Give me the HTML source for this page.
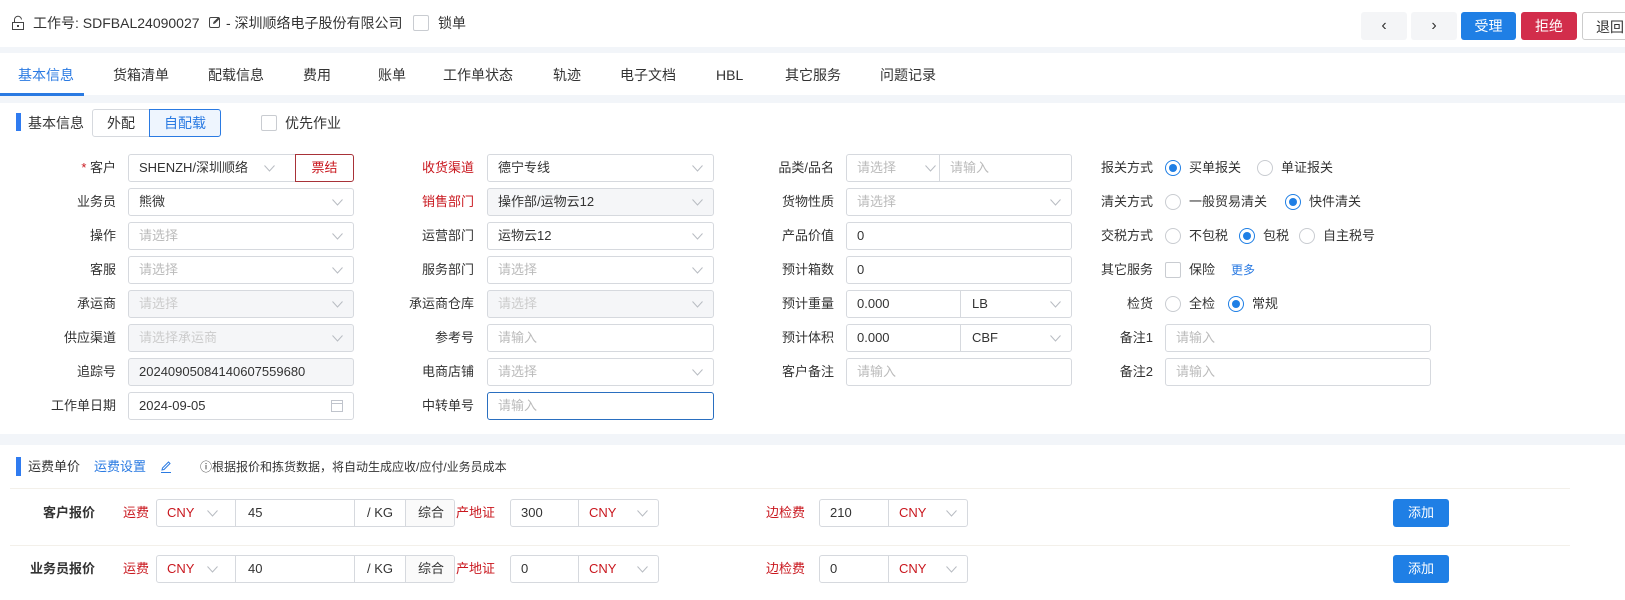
<!DOCTYPE html>
<html><head><meta charset="utf-8">
<style>
*{box-sizing:border-box;margin:0;padding:0}
body{width:1625px;height:600px;overflow:hidden;background:#fff;font-family:"Liberation Sans","Noto Sans CJK SC",sans-serif;font-size:13px;color:#333;position:relative}
.a{position:absolute}
.band{position:absolute;left:0;width:1625px;background:#f2f5f9}
.lbl{position:absolute;width:110px;text-align:right;line-height:28px;height:28px;white-space:nowrap}
.red{color:#c9171e}
.in{position:absolute;height:28px;border:1px solid #d6d9de;border-radius:3px;line-height:26px;padding-left:10px;background:#fff;white-space:nowrap;overflow:hidden}
.dis{background:#f5f6f8}
.ph{color:#bbb}
.chev{position:absolute;right:10px;top:10px;width:11px;height:7px}
.btn{position:absolute;top:12px;height:28px;border-radius:3px;text-align:center;line-height:28px;font-size:14px}
.radio{position:absolute;width:16px;height:16px;border:1px solid #c9ccd1;border-radius:50%;background:#fff}
.radio.on{border-color:#1f7fe5}
.radio.on:after{content:"";position:absolute;left:3px;top:3px;width:8px;height:8px;border-radius:50%;background:#1f7fe5}
.cb{position:absolute;width:16px;height:16px;border:1px solid #c9ccd1;border-radius:2px;background:#fff}
.t{position:absolute;line-height:16px;white-space:nowrap}
.seg{position:absolute;top:0;height:26px;border-left:1px solid #d6d9de;line-height:26px}
</style></head><body>
<svg width="0" height="0" style="position:absolute"><defs><symbol id="cv" viewBox="0 0 11 7"><path d="M0.5 0.5 L5.5 6 L10.5 0.5" fill="none" stroke="#b8bcc2" stroke-width="1"/></symbol></defs></svg>

<svg class="a" style="left:10px;top:15px" width="16" height="16" viewBox="0 0 16 16"><rect x="2.5" y="7.5" width="11" height="7" fill="none" stroke="#444"/><path d="M4.5 7.5 V5 a3.5 3.5 0 0 1 7 -0.5" fill="none" stroke="#444"/><rect x="7" y="10" width="2" height="2" fill="#444"/></svg>
<div class="t" style="left:33px;top:15px;font-size:14px;color:#333">工作号: SDFBAL24090027</div>
<svg class="a" style="left:209px;top:16px" width="12" height="12" viewBox="0 0 12 12"><rect x="0.5" y="1.5" width="10" height="10" rx="1.5" fill="none" stroke="#444"/><path d="M4 8 L4.5 6 L9.5 1 L11 2.5 L6 7.5 Z" fill="#444"/></svg>
<div class="t" style="left:226px;top:15px;font-size:14px">- 深圳顺络电子股份有限公司</div>
<div class="cb" style="left:413px;top:15px"></div>
<div class="t" style="left:438px;top:15px;font-size:14px">锁单</div>
<div class="btn" style="left:1361px;width:46px;background:#f4f5f7;font-size:16px">&#8249;</div>
<div class="btn" style="left:1411px;width:46px;background:#f4f5f7;font-size:16px">&#8250;</div>
<div class="btn" style="left:1461px;width:55px;background:#1f7fe5;color:#fff">受理</div>
<div class="btn" style="left:1521px;width:56px;background:#d22d4b;color:#fff">拒绝</div>
<div class="btn" style="left:1582px;width:56px;border:1px solid #ccc;background:#fff;color:#333">退回</div>

<div class="band" style="top:47px;height:6px"></div>
<div class="t" style="left:18px;top:67px;font-size:14px;color:#2a7ae2">基本信息</div>
<div class="t" style="left:113px;top:67px;font-size:14px">货箱清单</div>
<div class="t" style="left:208px;top:67px;font-size:14px">配载信息</div>
<div class="t" style="left:303px;top:67px;font-size:14px">费用</div>
<div class="t" style="left:378px;top:67px;font-size:14px">账单</div>
<div class="t" style="left:443px;top:67px;font-size:14px">工作单状态</div>
<div class="t" style="left:553px;top:67px;font-size:14px">轨迹</div>
<div class="t" style="left:620px;top:67px;font-size:14px">电子文档</div>
<div class="t" style="left:716px;top:67px;font-size:14px">HBL</div>
<div class="t" style="left:785px;top:67px;font-size:14px">其它服务</div>
<div class="t" style="left:880px;top:67px;font-size:14px">问题记录</div>
<div class="band" style="top:95px;height:8px"></div>
<div class="a" style="left:0;top:93px;width:84px;height:3px;background:#2a7ae2"></div>

<div class="a" style="left:16px;top:113px;width:5px;height:18px;background:#2f7bf0"></div>
<div class="t" style="left:28px;top:115px;font-size:14px">基本信息</div>
<div class="a" style="left:92px;top:109px;width:58px;height:28px;border:1px solid #d6d9de;border-radius:3px 0 0 3px;text-align:center;line-height:26px;font-size:14px">外配</div>
<div class="a" style="left:149px;top:109px;width:72px;height:28px;border:1px solid #2a7ae2;border-radius:0 3px 3px 0;background:#eef5fe;color:#2a7ae2;text-align:center;line-height:26px;font-size:14px">自配载</div>
<div class="cb" style="left:261px;top:115px"></div>
<div class="t" style="left:285px;top:115px;font-size:14px">优先作业</div>

<div class="lbl" style="left:6px;top:154px"><span class="red">* </span>客户</div>
<div class="in" style="left:128px;top:154px;width:168px;border-radius:3px 0 0 3px">SHENZH/深圳顺络<svg class="chev" style="right:20px;background:#fff;box-shadow:-10px 0 0 6px #fff"><use href="#cv"/></svg></div>
<div class="in" style="left:295px;top:154px;width:59px;border-color:#a83238;color:#c9171e;text-align:center;padding:0;border-radius:0 3px 3px 0">票结</div>
<div class="lbl" style="left:6px;top:188px">业务员</div>
<div class="in" style="left:128px;top:188px;width:226px">熊微<svg class="chev"><use href="#cv"/></svg></div>
<div class="lbl" style="left:6px;top:222px">操作</div>
<div class="in ph" style="left:128px;top:222px;width:226px">请选择<svg class="chev"><use href="#cv"/></svg></div>
<div class="lbl" style="left:6px;top:256px">客服</div>
<div class="in ph" style="left:128px;top:256px;width:226px">请选择<svg class="chev"><use href="#cv"/></svg></div>
<div class="lbl" style="left:6px;top:290px">承运商</div>
<div class="in dis ph" style="left:128px;top:290px;width:226px;color:#ccc">请选择<svg class="chev"><use href="#cv"/></svg></div>
<div class="lbl" style="left:6px;top:324px">供应渠道</div>
<div class="in dis" style="left:128px;top:324px;width:226px;color:#ccc">请选择承运商<svg class="chev"><use href="#cv"/></svg></div>
<div class="lbl" style="left:6px;top:358px">追踪号</div>
<div class="in dis" style="left:128px;top:358px;width:226px">20240905084140607559680</div>
<div class="lbl" style="left:6px;top:392px">工作单日期</div>
<div class="in" style="left:128px;top:392px;width:226px">2024-09-05<svg class="a" style="right:10px;top:7px" width="12" height="12"><rect x="0.5" y="0.5" width="11" height="11" fill="none" stroke="#c0c4cc"/><line x1="0" y1="3.5" x2="12" y2="3.5" stroke="#c0c4cc"/></svg></div>

<div class="lbl red" style="left:364px;top:154px">收货渠道</div>
<div class="in" style="left:487px;top:154px;width:227px">德宁专线<svg class="chev"><use href="#cv"/></svg></div>
<div class="lbl red" style="left:364px;top:188px">销售部门</div>
<div class="in dis" style="left:487px;top:188px;width:227px">操作部/运物云12<svg class="chev"><use href="#cv"/></svg></div>
<div class="lbl" style="left:364px;top:222px">运营部门</div>
<div class="in" style="left:487px;top:222px;width:227px">运物云12<svg class="chev"><use href="#cv"/></svg></div>
<div class="lbl" style="left:364px;top:256px">服务部门</div>
<div class="in ph" style="left:487px;top:256px;width:227px">请选择<svg class="chev"><use href="#cv"/></svg></div>
<div class="lbl" style="left:364px;top:290px">承运商仓库</div>
<div class="in dis" style="left:487px;top:290px;width:227px;color:#ccc">请选择<svg class="chev"><use href="#cv"/></svg></div>
<div class="lbl" style="left:364px;top:324px">参考号</div>
<div class="in ph" style="left:487px;top:324px;width:227px">请输入</div>
<div class="lbl" style="left:364px;top:358px">电商店铺</div>
<div class="in ph" style="left:487px;top:358px;width:227px">请选择<svg class="chev"><use href="#cv"/></svg></div>
<div class="lbl" style="left:364px;top:392px">中转单号</div>
<div class="in ph" style="left:487px;top:392px;width:227px;border-color:#2a6fc0">请输入</div>

<div class="lbl" style="left:724px;top:154px">品类/品名</div>
<div class="in ph" style="left:846px;top:154px;width:226px">请选择<svg class="chev" style="right:135px"><use href="#cv"/></svg><div class="seg" style="left:92px;padding-left:10px">请输入</div></div>
<div class="lbl" style="left:724px;top:188px">货物性质</div>
<div class="in ph" style="left:846px;top:188px;width:226px">请选择<svg class="chev"><use href="#cv"/></svg></div>
<div class="lbl" style="left:724px;top:222px">产品价值</div>
<div class="in" style="left:846px;top:222px;width:226px">0</div>
<div class="lbl" style="left:724px;top:256px">预计箱数</div>
<div class="in" style="left:846px;top:256px;width:226px">0</div>
<div class="lbl" style="left:724px;top:290px">预计重量</div>
<div class="in" style="left:846px;top:290px;width:226px">0.000<div class="seg" style="left:113px;width:113px;padding-left:11px">LB</div><svg class="chev"><use href="#cv"/></svg></div>
<div class="lbl" style="left:724px;top:324px">预计体积</div>
<div class="in" style="left:846px;top:324px;width:226px">0.000<div class="seg" style="left:113px;width:113px;padding-left:11px">CBF</div><svg class="chev"><use href="#cv"/></svg></div>
<div class="lbl" style="left:724px;top:358px">客户备注</div>
<div class="in ph" style="left:846px;top:358px;width:226px">请输入</div>

<div class="lbl" style="left:1043px;top:154px">报关方式</div>
<div class="radio on" style="left:1165px;top:160px"></div><div class="t" style="left:1189px;top:160px">买单报关</div>
<div class="radio" style="left:1257px;top:160px"></div><div class="t" style="left:1281px;top:160px">单证报关</div>
<div class="lbl" style="left:1043px;top:188px">清关方式</div>
<div class="radio" style="left:1165px;top:194px"></div><div class="t" style="left:1189px;top:194px">一般贸易清关</div>
<div class="radio on" style="left:1285px;top:194px"></div><div class="t" style="left:1309px;top:194px">快件清关</div>
<div class="lbl" style="left:1043px;top:222px">交税方式</div>
<div class="radio" style="left:1165px;top:228px"></div><div class="t" style="left:1189px;top:228px">不包税</div>
<div class="radio on" style="left:1239px;top:228px"></div><div class="t" style="left:1263px;top:228px">包税</div>
<div class="radio" style="left:1299px;top:228px"></div><div class="t" style="left:1323px;top:228px">自主税号</div>
<div class="lbl" style="left:1043px;top:256px">其它服务</div>
<div class="cb" style="left:1165px;top:262px"></div><div class="t" style="left:1189px;top:262px">保险</div><div class="t" style="left:1231px;top:262px;color:#2a7ae2;font-size:12px">更多</div>
<div class="lbl" style="left:1043px;top:290px">检货</div>
<div class="radio" style="left:1165px;top:296px"></div><div class="t" style="left:1189px;top:296px">全检</div>
<div class="radio on" style="left:1228px;top:296px"></div><div class="t" style="left:1252px;top:296px">常规</div>
<div class="lbl" style="left:1043px;top:324px">备注1</div>
<div class="in ph" style="left:1165px;top:324px;width:266px">请输入</div>
<div class="lbl" style="left:1043px;top:358px">备注2</div>
<div class="in ph" style="left:1165px;top:358px;width:266px">请输入</div>

<div class="band" style="top:434px;height:11px"></div>

<div class="a" style="left:16px;top:457px;width:5px;height:19px;background:#2f7bf0"></div>
<div class="t" style="left:28px;top:459px">运费单价</div>
<div class="t" style="left:94px;top:459px;color:#2a7ae2">运费设置</div>
<svg class="a" style="left:160px;top:460px" width="12" height="13" viewBox="0 0 12 13"><path d="M2 10 L2.5 8 L8.5 2 L10 3.5 L4 9.5 Z M1 12.5 H11" fill="none" stroke="#2a7ae2"/></svg>
<div class="t" style="left:200px;top:459px;font-size:12px">ⓘ根据报价和拣货数据，将自动生成应收/应付/业务员成本</div>
<div class="a" style="left:10px;top:488px;width:1560px;height:1px;background:#f3f0ea"></div>
<div class="a" style="left:10px;top:545px;width:1560px;height:1px;background:#f3f0ea"></div>

<div class="t" style="left:38px;top:505px;font-weight:bold;width:57px;text-align:right">客户报价</div>
<div class="t red" style="left:123px;top:505px">运费</div>
<div class="in" style="left:156px;top:499px;width:299px;color:#c9171e">CNY<svg class="chev" style="left:50px;right:auto"><use href="#cv"/></svg>
<div class="seg" style="left:78px;width:119px;padding-left:12px;color:#333">45</div>
<div class="seg" style="left:197px;width:51px;text-align:center;color:#333">/ KG</div>
<div class="seg" style="left:248px;width:51px;text-align:center;color:#333;background:#fafafa">综合</div></div>
<div class="t red" style="left:456px;top:505px">产地证</div>
<div class="in" style="left:510px;top:499px;width:149px">300<div class="seg" style="left:67px;width:82px;padding-left:10px;color:#c9171e">CNY</div><svg class="chev"><use href="#cv"/></svg></div>
<div class="t red" style="left:766px;top:505px">边检费</div>
<div class="in" style="left:819px;top:499px;width:149px">210<div class="seg" style="left:68px;width:81px;padding-left:10px;color:#c9171e">CNY</div><svg class="chev"><use href="#cv"/></svg></div>
<div class="a" style="left:1393px;top:499px;width:56px;height:28px;background:#1f7fe5;color:#fff;border-radius:3px;text-align:center;line-height:28px">添加</div>

<div class="t" style="left:25px;top:561px;font-weight:bold;width:70px;text-align:right">业务员报价</div>
<div class="t red" style="left:123px;top:561px">运费</div>
<div class="in" style="left:156px;top:555px;width:299px;color:#c9171e">CNY<svg class="chev" style="left:50px;right:auto"><use href="#cv"/></svg>
<div class="seg" style="left:78px;width:119px;padding-left:12px;color:#333">40</div>
<div class="seg" style="left:197px;width:51px;text-align:center;color:#333">/ KG</div>
<div class="seg" style="left:248px;width:51px;text-align:center;color:#333;background:#fafafa">综合</div></div>
<div class="t red" style="left:456px;top:561px">产地证</div>
<div class="in" style="left:510px;top:555px;width:149px">0<div class="seg" style="left:67px;width:82px;padding-left:10px;color:#c9171e">CNY</div><svg class="chev"><use href="#cv"/></svg></div>
<div class="t red" style="left:766px;top:561px">边检费</div>
<div class="in" style="left:819px;top:555px;width:149px">0<div class="seg" style="left:68px;width:81px;padding-left:10px;color:#c9171e">CNY</div><svg class="chev"><use href="#cv"/></svg></div>
<div class="a" style="left:1393px;top:555px;width:56px;height:28px;background:#1f7fe5;color:#fff;border-radius:3px;text-align:center;line-height:28px">添加</div>
</body></html>
